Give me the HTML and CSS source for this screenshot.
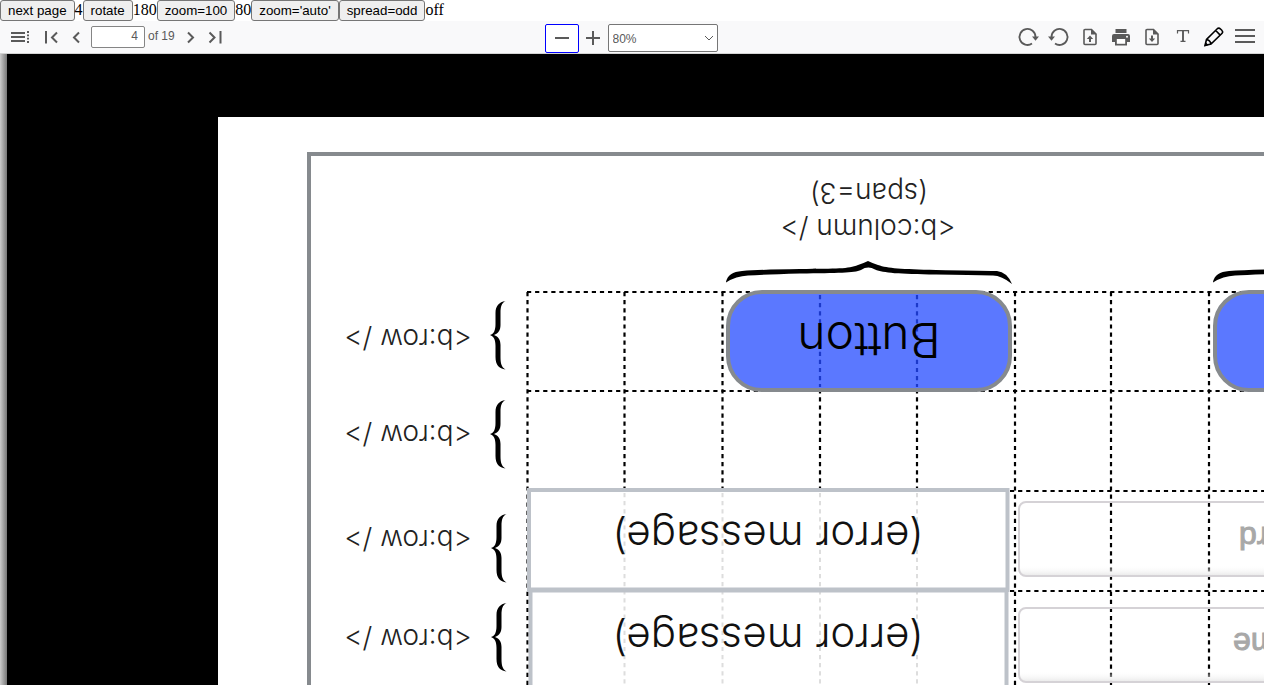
FILE: index.html
```html
<!DOCTYPE html>
<html lang="en">
<head>
<meta charset="utf-8">
<title>PDF viewer</title>
<link rel="stylesheet" href="styles.css">
</head>
<body>
<div class="controls">
  <button type="button">next page</button><span>4</span>
  <button type="button">rotate</button><span>180</span>
  <button type="button">zoom=100</button><span>80</span>
  <button type="button">zoom='auto'</button>
  <button type="button">spread=odd</button><span>off</span>
</div>
<header class="toolbar">
  <div class="group">
    <button class="tool" type="button" aria-label="Toggle sidebar"><svg width="20" height="14" viewBox="0 0 20 14"><path d="M1 3h14M1 7h14M1 11h14" stroke-width="2"/><path d="M17 2h2M17 5.300h2M17 8.600h2M17 12h2" stroke-width="1.800"/></svg></button>
    <div class="pager">
      <button class="nav" type="button" aria-label="First page"><svg width="16" height="14" viewBox="0 0 16 14"><path d="M2 1v12.500M13 2.500L8 7.500l5 5" stroke-width="2"/></svg></button>
      <button class="nav" type="button" aria-label="Previous page"><svg width="16" height="14" viewBox="0 0 16 14"><path d="M11 2.500L6 7.500l5 5" stroke-width="2"/></svg></button>
      <input class="page-number" id="page-number" type="text" value="4" aria-label="Page">
      <label class="page-count" for="page-number">of 19</label>
      <button class="nav" type="button" aria-label="Next page"><svg width="16" height="14" viewBox="0 0 16 14"><path d="M5 2.500l5 5-5 5" stroke-width="2"/></svg></button>
      <button class="nav" type="button" aria-label="Last page"><svg width="16" height="14" viewBox="0 0 16 14"><path d="M2.500 2.500l5 5-5 5M13.500 1v12.500" stroke-width="2"/></svg></button>
    </div>
  </div>
  <div class="group zoom">
    <button class="zoom-out" type="button" aria-label="Zoom out"><svg width="16" height="16" viewBox="0 0 16 16"><path d="M1 8h14" stroke-width="2"/></svg></button>
    <button class="zoom-in" type="button" aria-label="Zoom in"><svg width="16" height="16" viewBox="0 0 16 16"><path d="M1 8h14M8 1v14" stroke-width="2"/></svg></button>
    <div class="scale">
      <select aria-label="Zoom"><option>80%</option><option>100%</option></select>
      <svg class="chevron" width="12" height="8" viewBox="0 0 12 8"><path d="M2 2l4 4 4-4" stroke-width="1"/></svg>
    </div>
  </div>
  <div class="group end">
    <button class="tool" type="button" aria-label="Rotate clockwise"><svg width="22" height="20" viewBox="0 0 22 20"><path d="M15 16.600A8 8 0 1 1 18.500 10" stroke-width="1.800"/><path class="solid" d="M15 9.500h7l-3.500 4.300z"/></svg></button>
    <button class="tool" type="button" aria-label="Rotate counterclockwise"><svg width="22" height="20" viewBox="0 0 22 20"><path d="M7 16.600A8 8 0 1 0 3.500 10" stroke-width="1.800"/><path class="solid" d="M7 9.500H0l3.500 4.300z"/></svg></button>
    <button class="tool" type="button" aria-label="Open file"><svg width="16" height="18" viewBox="0 0 16 18"><path d="M3 1.500h6.500L14 6v9.500a1 1 0 0 1-1 1H3a1 1 0 0 1-1-1v-13a1 1 0 0 1 1-1z" stroke-width="1.600"/><path class="solid" d="M9 1v5.500h5.500zM8 7.500l3.200 3.500H9v3H7v-3H4.800z"/></svg></button>
    <button class="tool" type="button" aria-label="Print"><svg width="20" height="18" viewBox="0 0 20 18"><path class="solid" d="M4.500 1h11v4h-11zM3 6h14a2 2 0 0 1 2 2v6h-3v3.500H4V14H1V8a2 2 0 0 1 2-2z"/><path d="M5.800 11h8.400v4.800H5.800z" fill="#fff" stroke="none"/><circle cx="16" cy="8.700" r="1" fill="#fff" stroke="none"/></svg></button>
    <button class="tool" type="button" aria-label="Download"><svg width="16" height="18" viewBox="0 0 16 18"><path d="M3 1.500h6.500L14 6v9.500a1 1 0 0 1-1 1H3a1 1 0 0 1-1-1v-13a1 1 0 0 1 1-1z" stroke-width="1.600"/><path class="solid" d="M9 1v5.500h5.500zM8 14l3.200-3.500H9v-3H7v3H4.800z"/></svg></button>
    <button class="tool" type="button" aria-label="Text"><svg class="lift" width="14" height="14" viewBox="0 0 14 14"><path d="M1.500 4.500V1.700h11v2.800M4.500 12.400h5" stroke-width="1.200"/><path d="M7 1.700v10.600" stroke-width="1.900"/></svg></button>
    <button class="tool ink" type="button" aria-label="Draw"><svg width="22" height="22" viewBox="0 0 22 22"><path d="M2 19.500l1.500-6L14.500 2.500q1.500-1 3 .5l1.300 1.300q1.500 1.500.3 3L8 18zM12.700 4.500l4.500 4.600M3.500 13.500Q7 14 8 18" stroke-width="1.600"/><path d="M1.500 20.500l1-4.500 3 3z" fill="#000" stroke="none"/></svg></button>
    <button class="tool" type="button" aria-label="Menu"><svg class="lift" width="20" height="16" viewBox="0 0 20 16"><path d="M0 2h20M0 8h20M0 14h20" stroke-width="2"/></svg></button>
  </div>
</header>
<main class="viewer">
  <svg class="sheet" width="1600" height="900" viewBox="218 117 1600 900">
    <defs>
      <path id="brace" d="M15.500 0C9 1 5.500 5 5.500 12v11c0 6-1.500 10-5.500 11 4 1.500 5.500 5 5.500 11v11c0 8 3.500 11.500 10 12.500-4-2.500-5-6-5-12.500V44c0-5-2-8.500-6.500-10 4.500-1.500 6.500-5 6.500-10V12c0-6 1-10 5-12z"/>
      <path id="wide-brace" d="M0 21Q2 11 16 10Q35 8.500 74 8C112 7.500 122 8 132 4Q138 2 142 0Q146 2 152 4C162 7.500 175 8 210 9Q250 9.500 271 10Q281 11 286 23Q275 14 266 14.500Q245 14 210 13.500C172 13 158 12 149 8.500Q142 4.500 135 9C128 12 112 12 74 12.500Q38 13.500 22 14.500Q10 15 0 21.500z"/>
      <g id="btn"><rect x="2" y="2" width="282" height="98" rx="34" fill="#5b78ff"/><path class="inner-dash" d="M94 5v92M191 5v92"/><rect x="2" y="2" width="282" height="98" rx="34" fill="none" stroke="#868a8e" stroke-width="4"/></g>
      <linearGradient id="field-shade" x2="0" y2="1"><stop offset="0" stop-color="#fff" stop-opacity="0"/><stop offset=".85" stop-color="#fff" stop-opacity="0"/><stop offset="1" stop-color="#e8e8e8"/></linearGradient>
    </defs>
    <rect x="309" y="154" width="1400" height="820" fill="none" stroke="#868a8e" stroke-width="4"/>
    <path class="dash" d="M527 292h1170M527 391h1170M1010 491h690M1010 591h690"/>
    <path class="dash" d="M527.500 292v700M624.500 292v198M722.500 292v198M820 292v198M917 292v198M1015 292v700M1111 292v700M1209 292v700"/>
    <path class="pale-dash" d="M624.500 493v500M722.500 493v500M820 493v500M917 493v500"/>
    <g class="boxes"><rect x="530.500" y="590" width="476" height="200"/><rect x="529" y="490" width="478.500" height="100"/><path d="M529 590h478" stroke-width="5"/></g>
    <g class="fields"><rect x="1019" y="502" width="600" height="74" rx="7"/><rect x="1019" y="608" width="600" height="74" rx="7"/></g>
    <use href="#btn" x="726" y="290"/><use href="#btn" x="1213" y="290"/>
    <use href="#wide-brace" x="726" y="261"/><use href="#wide-brace" x="1213" y="261"/>
    <use href="#brace" x="490" y="301"/><use href="#brace" x="490" y="400"/><use href="#brace" x="491" y="514"/><use href="#brace" x="491" y="603"/>
    <g class="caption">
      <text transform="translate(869 183) rotate(180)">(span=3)</text>
      <text transform="translate(868 219) rotate(180)">&lt;b:column /&gt;</text>
      <text transform="translate(408 329) rotate(180)">&lt;b:row /&gt;</text>
      <text transform="translate(408 425) rotate(180)">&lt;b:row /&gt;</text>
      <text transform="translate(408 530) rotate(180)">&lt;b:row /&gt;</text>
      <text transform="translate(408 629) rotate(180)">&lt;b:row /&gt;</text>
    </g>
    <text class="button-text" transform="translate(869 323) rotate(180)">Button</text>
    <g class="message">
      <text transform="translate(768 522) rotate(180)">(error message)</text>
      <text transform="translate(768 624) rotate(180)">(error message)</text>
    </g>
    <g class="placeholder">
      <text transform="translate(1239 527) rotate(180)">Password</text>
      <text transform="translate(1233 633) rotate(180)">Username</text>
    </g>
  </svg>
</main>
</body>
</html>
```

FILE: styles.css
```css
* { box-sizing: border-box; }
body {
  margin: 0;
  height: 100vh;
  display: flex;
  flex-direction: column;
  overflow: hidden;
  background: #fff;
}
.controls {
  display: flex;
  height: 21px;
  font: 16px/20px "Liberation Serif", serif;
}
.controls button {
  height: 21px;
  padding: 0 7px;
  border: 1px solid #767676;
  border-radius: 3px;
  background: #efefef;
  color: #000;
  font: 13.333px/19px "Liberation Sans", sans-serif;
}
.toolbar {
  display: grid;
  grid-template-columns: 1fr auto 1fr;
  align-items: center;
  height: 33px;
  flex: none;
  padding: 0 4px;
  background: #f9f9fa;
  border-bottom: 1px solid #d4d4d4;
  font: 12px/16px "Liberation Sans", sans-serif;
  color: #5a5a5a;
}
.toolbar button {
  display: flex;
  align-items: center;
  justify-content: center;
  padding: 0;
  border: 0;
  background: none;
  color: #5a5a5a;
}
.toolbar svg { fill: none; stroke: currentColor; flex: none; }
.toolbar svg .solid { fill: currentColor; stroke: none; }
.group { display: flex; align-items: center; }
.end { justify-content: flex-end; }
.toolbar .tool { width: 31px; height: 28px; }
.toolbar .ink { color: #000; }
.toolbar .lift { margin-bottom: 3px; }
.pager { display: flex; align-items: center; margin-left: 5px; }
.toolbar .nav { width: 24px; height: 28px; }
.page-number {
  width: 54px;
  height: 22px;
  margin: 0 3px;
  padding: 0 6px 2px;
  border: 1px solid #858585;
  border-radius: 2px;
  background: #fff;
  color: #5a5a5a;
  font: inherit;
  text-align: right;
}
.page-count { margin-right: 4px; padding-bottom: 2px; }
.zoom { padding: 2px 2px 0 0; }
.toolbar .zoom-out {
  width: 34px;
  height: 29px;
  border: 1px solid #00f;
  border-radius: 2px;
  background: #fff;
}
.toolbar .zoom-in { width: 29px; height: 29px; }
.scale { position: relative; }
.scale select {
  display: block;
  width: 110px;
  height: 28px;
  padding: 1px 4px 0;
  border: 1px solid #767676;
  border-radius: 2px;
  background: #fff;
  color: #5a5a5a;
  font: inherit;
  appearance: none;
}
.chevron { position: absolute; right: 3px; top: 10px; pointer-events: none; }
.viewer {
  flex: 1;
  min-height: 0;
  overflow: hidden;
  padding: 63px 0 0 218px;
  background: linear-gradient(90deg, #ccc, #777 7px, #000 7px);
}
.sheet { display: block; background: #fff; }
.dash, .pale-dash, .inner-dash {
  fill: none;
  stroke: #000;
  stroke-width: 2.2;
  stroke-dasharray: 4.2 3.9;
}
.pale-dash { stroke: #ddd; stroke-width: 2; }
.inner-dash { stroke: #1c39c9; }
.boxes { fill: none; stroke: #bdc2c9; stroke-width: 4; }
.fields rect { fill: url(#field-shade); stroke: #d5d2d6; stroke-width: 2; }
.sheet text { font-family: Inter, "Liberation Sans", sans-serif; font-weight: 300; text-anchor: middle; }
.caption text { font-size: 28px; fill: #222; }
.sheet .button-text { font-size: 48px; }
.message text { font-size: 42px; fill: #111; }
.placeholder text { font-family: "Liberation Sans", sans-serif; font-size: 32px; font-weight: 400; fill: #a8a8a8; stroke: #a8a8a8; text-anchor: end; }
```
